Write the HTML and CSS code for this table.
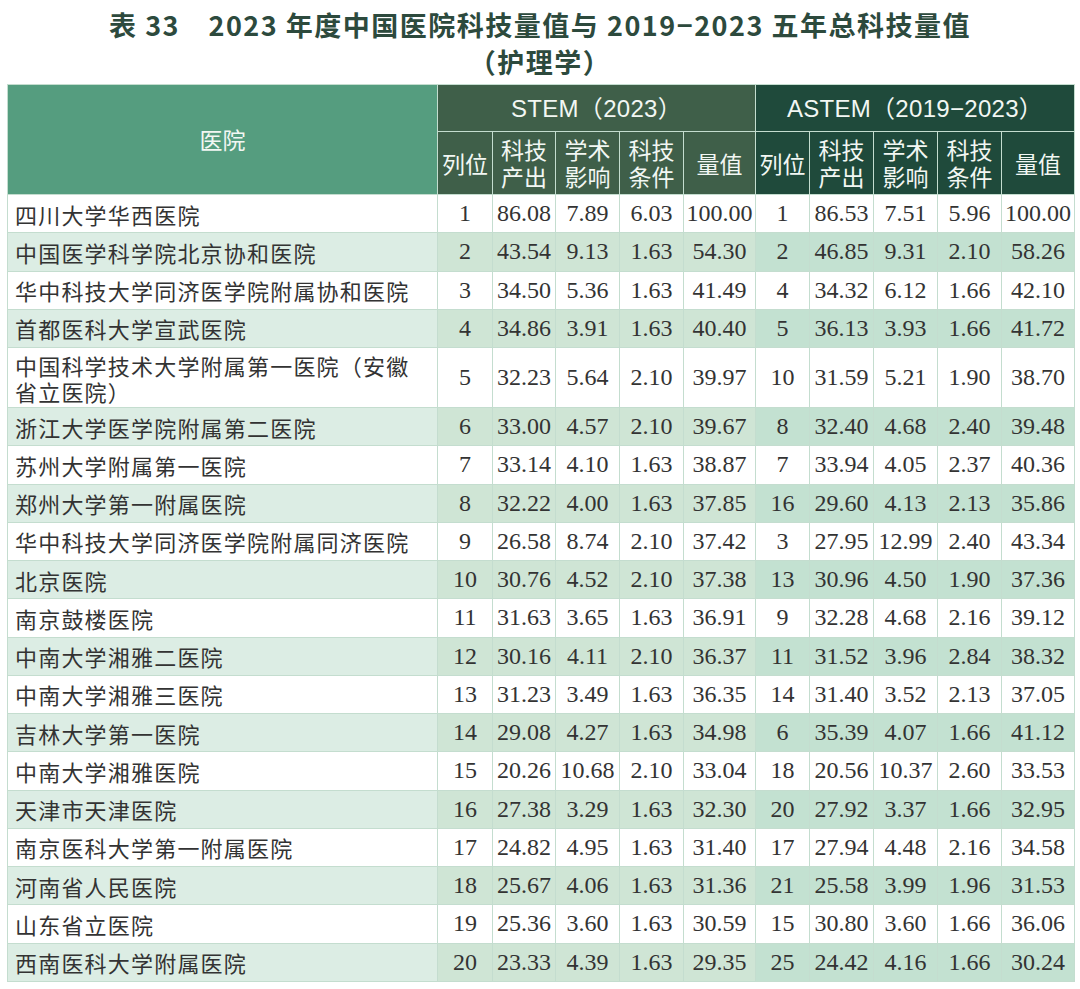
FILE: index.html
```html
<!DOCTYPE html>
<html lang="zh">
<head>
<meta charset="utf-8">
<link rel="stylesheet" href="styles.css">
</head>
<body>
<h1 class="title">表 33　2023 年度中国医院科技量值与 2019−2023 五年总科技量值<br>（护理学）</h1>
<table class="rank">
<colgroup>
<col class="c-name"><col class="c-rank"><col class="c-a"><col class="c-b"><col class="c-c"><col class="c-v"><col class="c-rank2"><col class="c-b"><col class="c-b"><col class="c-b"><col class="c-v2">
</colgroup>
<thead>
<tr class="h1">
<th class="h-name" rowspan="2">医院</th>
<th class="h-stem group" colspan="5">STEM（2023）</th>
<th class="h-astem group" colspan="5">ASTEM（2019−2023）</th>
</tr>
<tr class="h2">
<th class="h-stem">列位</th><th class="h-stem">科技<br>产出</th><th class="h-stem">学术<br>影响</th><th class="h-stem">科技<br>条件</th><th class="h-stem">量值</th>
<th class="h-astem">列位</th><th class="h-astem">科技<br>产出</th><th class="h-astem">学术<br>影响</th><th class="h-astem">科技<br>条件</th><th class="h-astem">量值</th>
</tr>
</thead>
<tbody>
<tr><td class="name">四川大学华西医院</td><td class="s">1</td><td class="s">86.08</td><td class="s">7.89</td><td class="s">6.03</td><td class="s">100.00</td><td class="a">1</td><td class="a">86.53</td><td class="a">7.51</td><td class="a">5.96</td><td class="a">100.00</td></tr>
<tr><td class="name">中国医学科学院北京协和医院</td><td class="s">2</td><td class="s">43.54</td><td class="s">9.13</td><td class="s">1.63</td><td class="s">54.30</td><td class="a">2</td><td class="a">46.85</td><td class="a">9.31</td><td class="a">2.10</td><td class="a">58.26</td></tr>
<tr><td class="name">华中科技大学同济医学院附属协和医院</td><td class="s">3</td><td class="s">34.50</td><td class="s">5.36</td><td class="s">1.63</td><td class="s">41.49</td><td class="a">4</td><td class="a">34.32</td><td class="a">6.12</td><td class="a">1.66</td><td class="a">42.10</td></tr>
<tr><td class="name">首都医科大学宣武医院</td><td class="s">4</td><td class="s">34.86</td><td class="s">3.91</td><td class="s">1.63</td><td class="s">40.40</td><td class="a">5</td><td class="a">36.13</td><td class="a">3.93</td><td class="a">1.66</td><td class="a">41.72</td></tr>
<tr class="tall"><td class="name">中国科学技术大学附属第一医院（安徽<br>省立医院）</td><td class="s">5</td><td class="s">32.23</td><td class="s">5.64</td><td class="s">2.10</td><td class="s">39.97</td><td class="a">10</td><td class="a">31.59</td><td class="a">5.21</td><td class="a">1.90</td><td class="a">38.70</td></tr>
<tr><td class="name">浙江大学医学院附属第二医院</td><td class="s">6</td><td class="s">33.00</td><td class="s">4.57</td><td class="s">2.10</td><td class="s">39.67</td><td class="a">8</td><td class="a">32.40</td><td class="a">4.68</td><td class="a">2.40</td><td class="a">39.48</td></tr>
<tr><td class="name">苏州大学附属第一医院</td><td class="s">7</td><td class="s">33.14</td><td class="s">4.10</td><td class="s">1.63</td><td class="s">38.87</td><td class="a">7</td><td class="a">33.94</td><td class="a">4.05</td><td class="a">2.37</td><td class="a">40.36</td></tr>
<tr><td class="name">郑州大学第一附属医院</td><td class="s">8</td><td class="s">32.22</td><td class="s">4.00</td><td class="s">1.63</td><td class="s">37.85</td><td class="a">16</td><td class="a">29.60</td><td class="a">4.13</td><td class="a">2.13</td><td class="a">35.86</td></tr>
<tr><td class="name">华中科技大学同济医学院附属同济医院</td><td class="s">9</td><td class="s">26.58</td><td class="s">8.74</td><td class="s">2.10</td><td class="s">37.42</td><td class="a">3</td><td class="a">27.95</td><td class="a">12.99</td><td class="a">2.40</td><td class="a">43.34</td></tr>
<tr><td class="name">北京医院</td><td class="s">10</td><td class="s">30.76</td><td class="s">4.52</td><td class="s">2.10</td><td class="s">37.38</td><td class="a">13</td><td class="a">30.96</td><td class="a">4.50</td><td class="a">1.90</td><td class="a">37.36</td></tr>
<tr><td class="name">南京鼓楼医院</td><td class="s">11</td><td class="s">31.63</td><td class="s">3.65</td><td class="s">1.63</td><td class="s">36.91</td><td class="a">9</td><td class="a">32.28</td><td class="a">4.68</td><td class="a">2.16</td><td class="a">39.12</td></tr>
<tr><td class="name">中南大学湘雅二医院</td><td class="s">12</td><td class="s">30.16</td><td class="s">4.11</td><td class="s">2.10</td><td class="s">36.37</td><td class="a">11</td><td class="a">31.52</td><td class="a">3.96</td><td class="a">2.84</td><td class="a">38.32</td></tr>
<tr><td class="name">中南大学湘雅三医院</td><td class="s">13</td><td class="s">31.23</td><td class="s">3.49</td><td class="s">1.63</td><td class="s">36.35</td><td class="a">14</td><td class="a">31.40</td><td class="a">3.52</td><td class="a">2.13</td><td class="a">37.05</td></tr>
<tr><td class="name">吉林大学第一医院</td><td class="s">14</td><td class="s">29.08</td><td class="s">4.27</td><td class="s">1.63</td><td class="s">34.98</td><td class="a">6</td><td class="a">35.39</td><td class="a">4.07</td><td class="a">1.66</td><td class="a">41.12</td></tr>
<tr><td class="name">中南大学湘雅医院</td><td class="s">15</td><td class="s">20.26</td><td class="s">10.68</td><td class="s">2.10</td><td class="s">33.04</td><td class="a">18</td><td class="a">20.56</td><td class="a">10.37</td><td class="a">2.60</td><td class="a">33.53</td></tr>
<tr><td class="name">天津市天津医院</td><td class="s">16</td><td class="s">27.38</td><td class="s">3.29</td><td class="s">1.63</td><td class="s">32.30</td><td class="a">20</td><td class="a">27.92</td><td class="a">3.37</td><td class="a">1.66</td><td class="a">32.95</td></tr>
<tr><td class="name">南京医科大学第一附属医院</td><td class="s">17</td><td class="s">24.82</td><td class="s">4.95</td><td class="s">1.63</td><td class="s">31.40</td><td class="a">17</td><td class="a">27.94</td><td class="a">4.48</td><td class="a">2.16</td><td class="a">34.58</td></tr>
<tr><td class="name">河南省人民医院</td><td class="s">18</td><td class="s">25.67</td><td class="s">4.06</td><td class="s">1.63</td><td class="s">31.36</td><td class="a">21</td><td class="a">25.58</td><td class="a">3.99</td><td class="a">1.96</td><td class="a">31.53</td></tr>
<tr><td class="name">山东省立医院</td><td class="s">19</td><td class="s">25.36</td><td class="s">3.60</td><td class="s">1.63</td><td class="s">30.59</td><td class="a">15</td><td class="a">30.80</td><td class="a">3.60</td><td class="a">1.66</td><td class="a">36.06</td></tr>
<tr><td class="name">西南医科大学附属医院</td><td class="s">20</td><td class="s">23.33</td><td class="s">4.39</td><td class="s">1.63</td><td class="s">29.35</td><td class="a">25</td><td class="a">24.42</td><td class="a">4.16</td><td class="a">1.66</td><td class="a">30.24</td></tr>
</tbody>
</table>
</body>
</html>
```

FILE: styles.css
```css
html, body {
  margin: 0;
  padding: 0;
  background: #ffffff;
}

.title {
  margin: 0;
  padding-top: 6px;
  font-family: "Noto Sans CJK SC", "Noto Sans", sans-serif;
  font-weight: 700;
  font-size: 27px;
  line-height: 37px;
  letter-spacing: 1.5px;
  color: #2d4a3d;
  text-align: center;
}

.rank {
  margin: 4px 0 0 7px;
  width: 1068px;
  table-layout: fixed;
  border-collapse: collapse;
}

.c-name { width: 430px; }
.c-rank { width: 55px; }
.c-a { width: 63px; }
.c-b { width: 64px; }
.c-c { width: 64px; }
.c-v { width: 72px; }
.c-rank2 { width: 54px; }
.c-v2 { width: 73px; }

.rank th,
.rank td {
  border: 1px solid #c4ddcf;
  padding: 0;
  vertical-align: middle;
}

.rank th {
  font-family: "Noto Sans CJK SC", "Noto Sans", sans-serif;
  font-weight: 400;
  color: #f2f7f3;
  font-size: 23px;
  line-height: 27px;
  text-align: center;
}

.h1 { height: 47px; }
.h2 { height: 63px; }

.rank th.group {
  font-family: "Liberation Sans", "Noto Sans CJK SC", sans-serif;
  font-size: 24px;
  letter-spacing: 0.3px;
}

.h-name { background: #559d7f; }
.h-stem { background: #3f5f49; }
.h-astem { background: #1f4a3b; }

.rank td {
  height: 37.25px;
  color: #333333;
}

.rank tr.tall td { height: 59px; }

.name {
  font-family: "Noto Sans CJK SC", sans-serif;
  font-size: 22px;
  line-height: 26px;
  letter-spacing: 1.2px;
  padding-left: 7px !important;
  text-align: left;
}

.s, .a {
  font-family: "Liberation Serif", "Times New Roman", serif;
  font-size: 24px;
  text-align: center;
  white-space: nowrap;
}

tbody tr:nth-child(even) .name { background: #dcede4; }
tbody tr:nth-child(even) .s { background: #cfe5d5; }
tbody tr:nth-child(even) .a { background: #c3e1d1; }
```
